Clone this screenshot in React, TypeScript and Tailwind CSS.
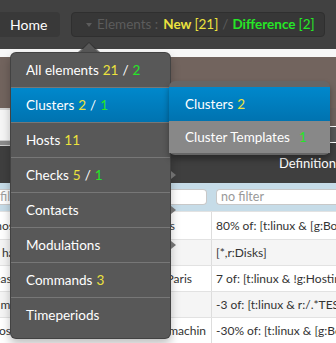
import React from 'react';

const YELLOW = 'text-[#ece23e]';
const GREEN = 'text-[#26e626]';

type Item = { label: string; a?: string; b?: string; arrow?: boolean; active?: boolean };

const items: Item[] = [
  { label: 'All elements', a: '21', b: '2' },
  { label: 'Clusters', a: '2', b: '1', arrow: true, active: true },
  { label: 'Hosts', a: '11', arrow: true },
  { label: 'Checks', a: '5', b: '1', arrow: true },
  { label: 'Contacts', arrow: true },
  { label: 'Modulations', arrow: true },
  { label: 'Commands', a: '3' },
  { label: 'Timeperiods' },
];

const rows = [
  { left: 'ct linux hosts with connections to Borders', pr: 'pr-[36px]', def: '80% of: [t:linux & [g:Bordeaux]]', bg: 'bg-white' },
  { left: 'hash of the disks for all the linux', pr: 'pr-[40px]', def: '[*,r:Disks]', bg: 'bg-[#f5f5f5]' },
  { left: 'east hosts that are not hosted in Paris', pr: 'pr-[19px]', def: '7 of: [t:linux & !g:Hosting]', bg: 'bg-white' },
  { left: 'no more than 3 test hosts are down', pr: 'pr-[40px]', def: '-3 of: [t:linux & r:/.*TEST/]', bg: 'bg-[#f5f5f5]' },
  { left: 'Most Sopet of Bux and Paris linux machin', pr: 'pr-[5px]', def: '-30% of: [t:linux & [g:Bordeaux]]', bg: 'bg-white' },
];

const Counts: React.FC<{ a?: string; b?: string }> = ({ a, b }) => (
  <>
    {a && <span className={`ml-[4px] ${YELLOW}`}>{a}</span>}
    {b && (
      <>
        <span className="mx-[4px]">/</span>
        <span className={GREEN}>{b}</span>
      </>
    )}
  </>
);

const App: React.FC = () => {
  return (
    <div className="relative w-[336px] h-[343px] overflow-hidden bg-white font-['Lato','Open_Sans',sans-serif]">
      {/* navbar */}
      <nav className="h-[49px] bg-[#414141] flex items-center">
        <div className="h-[25px] w-[60px] bg-[#393939] rounded-r-[4px] flex items-center pl-[10px] text-white text-[14px]">
          Home
        </div>
        <div className="ml-[11px] w-[254px] h-[25px] border border-[#2f2f2f] bg-[#373737] rounded-[4px] flex items-center pl-[14px] text-[13.5px] whitespace-nowrap">
          <span className="w-0 h-0 border-x-[3px] border-x-transparent border-t-[4px] border-t-[#5c5c5c] mr-[5px]" />
          <span className="text-[#5c5c5c]">Elements :</span>
          <span className={`ml-[5px] font-bold ${YELLOW}`}>New</span>
          <span className={`ml-[3px] ${YELLOW}`}>[21]</span>
          <span className="mx-[4px] text-[#5c5c5c]">/</span>
          <span className={`font-bold ${GREEN}`}>Difference</span>
          <span className={`ml-[3px] ${GREEN}`}>[2]</span>
        </div>
      </nav>

      <div className="h-[8px] bg-[#f7f7f7]" />
      <div className="h-[51px] bg-[#72645e]" />

      {/* toolbar band */}
      <div className="h-[38px] flex">
        <div className="flex-1 flex flex-col">
          <div className="h-[2px] bg-[#d8d8d8]" />
          <div className="h-[30px] bg-[#f6f6f6]" />
          <div className="h-[6px] bg-[#8c8c8c] border-y border-[#cfcfcf]" />
        </div>
        <div className="w-[20px] flex flex-col">
          <div className="h-[18px] bg-[#6e625e]" />
          <div className="h-[17px] bg-[#585858] border-y border-white" />
          <div className="h-[3px] bg-[#3f3f3f]" />
        </div>
      </div>

      {/* table header */}
      <div className="h-[37px] bg-[#3f3f3f] flex text-white text-[13px]">
        <div className="w-[211px]" />
        <div className="pl-[69px] pt-[8px]">Definition</div>
      </div>

      {/* filter row */}
      <div className="h-[28px] bg-[#c6dce8] flex items-center">
        <div className="w-[207px] h-[16px] bg-white rounded-r-[4px] border border-l-0 border-[#c8c8c8] text-[12.5px] leading-[14px] text-[#a0a0a0] overflow-hidden whitespace-nowrap">
          filter
        </div>
        <div className="ml-[9px] flex-1 h-[16px] bg-white rounded-l-[4px] border border-r-0 border-[#c8c8c8] pl-[4px] text-[12.5px] leading-[14px] text-[#999]">
          no filter
        </div>
      </div>

      {/* rows */}
      {rows.map((r, i) => (
        <div key={i} className={`flex text-[12px] text-[#333] border-t border-[#e2e2e2] ${r.bg} ${i === 0 ? 'h-[28px]' : 'h-[26px]'}`}>
          <div className={`w-[212px] shrink-0 border-r border-[#dddddd] flex items-center justify-end overflow-hidden whitespace-nowrap ${r.pr}`}>
            {r.left}
          </div>
          <div className="pl-[4px] flex items-center whitespace-nowrap overflow-hidden">{r.def}</div>
        </div>
      ))}

      {/* main dropdown pointer */}
      <div className="absolute left-[78px] top-[42px] w-0 h-0 border-x-[11px] border-x-transparent border-b-[10px] border-b-[#2c2c2c]/60" />
      <div className="absolute left-[79px] top-[43px] w-0 h-0 border-x-[10px] border-x-transparent border-b-[10px] border-b-[#585858]" />

      {/* main dropdown */}
      <div className="absolute left-[10px] top-[52px] w-[161px] pb-[5px] bg-[#585858] rounded-[6px] border border-black/25 shadow-[0_5px_10px_rgba(0,0,0,0.25)] text-white text-[13.5px]">
        {items.map((it, i) => (
          <div
            key={it.label}
            className={`relative h-[35px] flex items-center pl-[15px] whitespace-nowrap ${
              i < items.length - 1 ? 'border-b border-[#777]' : ''
            } ${it.active ? 'bg-gradient-to-b from-[#0088cc] to-[#0073b0]' : ''} ${i === 0 ? 'rounded-t-[6px]' : ''}`}
          >
            <span>{it.label}</span>
            <Counts a={it.a} b={it.b} />
            {it.arrow && (
              <span className="absolute right-[-6px] top-[13px] w-0 h-0 border-y-[4px] border-y-transparent border-l-[5px] border-l-[#6f6f6f]" />
            )}
          </div>
        ))}
      </div>

      {/* sub dropdown */}
      <div className="absolute left-[169px] top-[81px] w-[161px] pt-[6px] pb-[2px] bg-[#666] rounded-[6px] shadow-[0_4px_6px_rgba(0,0,0,0.35)] text-white text-[13.5px]">
        <div className="h-[34px] flex items-center pl-[16px] bg-gradient-to-b from-[#0088cc] to-[#0073b0]">
          <span>Clusters</span>
          <span className={`ml-[4px] ${YELLOW}`}>2</span>
        </div>
        <div className="h-[32px] flex items-center pl-[16px] bg-[#888]">
          <span>Cluster Templates</span>
          <span className={`ml-[9px] ${GREEN}`}>1</span>
        </div>
      </div>
    </div>
  );
};

export default App;
